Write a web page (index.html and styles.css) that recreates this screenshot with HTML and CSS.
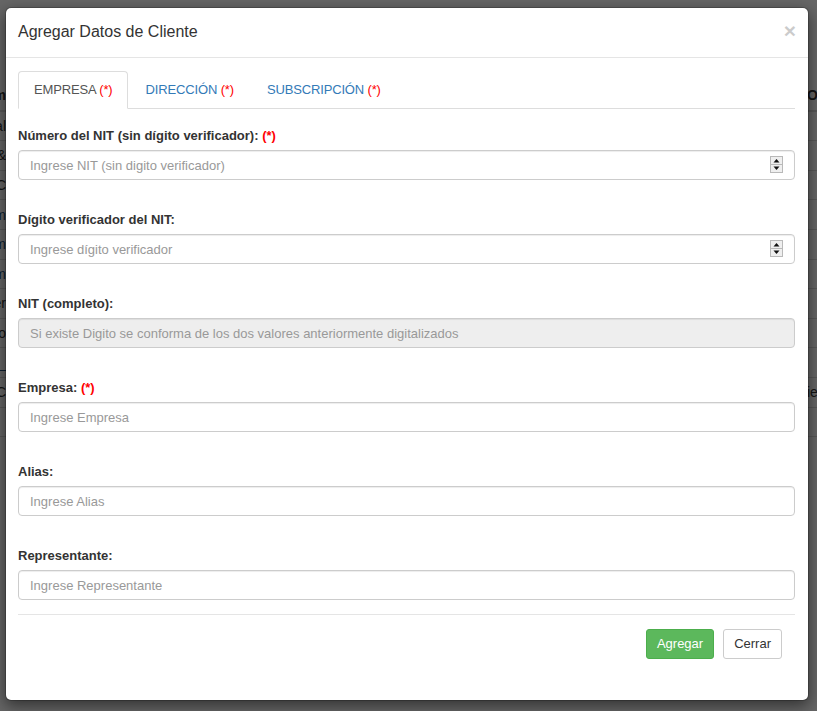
FILE: index.html
```html
<!DOCTYPE html>
<html lang="es">
<head>
<meta charset="utf-8">
<title>Agregar Datos de Cliente</title>
<link rel="stylesheet" href="styles.css">
</head>
<body>
<div class="page">
  <div class="bg-table">
    <div class="bg-row head"><div class="bg-l">Nom</div><div class="bg-m"></div><div class="bg-r">O</div></div>
    <div class="bg-row"><div class="bg-l">Dal</div><div class="bg-m"></div><div class="bg-r"></div></div>
    <div class="bg-row"><div class="bg-l">A &amp;</div><div class="bg-m"></div><div class="bg-r"></div></div>
    <div class="bg-row"><div class="bg-l">ABC</div><div class="bg-m"></div><div class="bg-r"></div></div>
    <div class="bg-row"><div class="bg-l link">Sam</div><div class="bg-m"></div><div class="bg-r"></div></div>
    <div class="bg-row"><div class="bg-l link">Tam</div><div class="bg-m"></div><div class="bg-r"></div></div>
    <div class="bg-row"><div class="bg-l link">Jim</div><div class="bg-m"></div><div class="bg-r"></div></div>
    <div class="bg-row"><div class="bg-l">Ber</div><div class="bg-m"></div><div class="bg-r"></div></div>
    <div class="bg-row"><div class="bg-l">Lo</div><div class="bg-m"></div><div class="bg-r"></div></div>
    <div class="bg-row"><div class="bg-l link">Li_</div><div class="bg-m"></div><div class="bg-r"></div></div>
    <div class="bg-row"><div class="bg-l">AC</div><div class="bg-m"></div><div class="bg-r">ie</div></div>
    <div class="bg-row"><div class="bg-l"></div><div class="bg-m"></div><div class="bg-r"></div></div>
    <div class="bg-row"><div class="bg-l"></div><div class="bg-m"></div><div class="bg-r"></div></div>
  </div>
</div>
<div class="backdrop"></div>

<div class="modal">
  <div class="modal-header">
    <h4 class="modal-title">Agregar Datos de Cliente</h4>
    <button class="close" type="button">&times;</button>
  </div>
  <div class="modal-body">
    <ul class="nav-tabs">
      <li class="active"><a>EMPRESA <span class="req">(*)</span></a></li>
      <li><a>DIRECCIÓN <span class="req">(*)</span></a></li>
      <li><a>SUBSCRIPCIÓN <span class="req">(*)</span></a></li>
    </ul>
    <div class="tab-content">
      <div class="form-group">
        <label>Número del NIT (sin dígito verificador): <span class="req">(*)</span></label>
        <div class="input-wrap">
          <input class="form-control" type="text" placeholder="Ingrese NIT (sin digito verificador)">
          <span class="spinner"><svg width="13" height="17" viewBox="0 0 13 17"><rect x="0.5" y="0.5" width="12" height="16" fill="#efefef" stroke="#b9b9b9"/><line x1="1" y1="8.5" x2="12" y2="8.5" stroke="#b9b9b9"/><polygon points="6.5,3 9.5,6.5 3.5,6.5" fill="#111"/><polygon points="3.5,10.5 9.5,10.5 6.5,14" fill="#111"/></svg></span>
        </div>
      </div>
      <div class="form-group">
        <label>Dígito verificador del NIT:</label>
        <div class="input-wrap">
          <input class="form-control" type="text" placeholder="Ingrese dígito verificador">
          <span class="spinner"><svg width="13" height="17" viewBox="0 0 13 17"><rect x="0.5" y="0.5" width="12" height="16" fill="#efefef" stroke="#b9b9b9"/><line x1="1" y1="8.5" x2="12" y2="8.5" stroke="#b9b9b9"/><polygon points="6.5,3 9.5,6.5 3.5,6.5" fill="#111"/><polygon points="3.5,10.5 9.5,10.5 6.5,14" fill="#111"/></svg></span>
        </div>
      </div>
      <div class="form-group">
        <label>NIT (completo):</label>
        <input class="form-control" type="text" disabled placeholder="Si existe Digito se conforma de los dos valores anteriormente digitalizados">
      </div>
      <div class="form-group">
        <label>Empresa: <span class="req">(*)</span></label>
        <input class="form-control" type="text" placeholder="Ingrese Empresa">
      </div>
      <div class="form-group">
        <label>Alias:</label>
        <input class="form-control" type="text" placeholder="Ingrese Alias">
      </div>
      <div class="form-group last">
        <label>Representante:</label>
        <input class="form-control" type="text" placeholder="Ingrese Representante">
      </div>
    </div>
    <hr class="divider">
    <div class="modal-footer">
      <button class="btn btn-success" type="button">Agregar</button>
      <button class="btn btn-default" type="button">Cerrar</button>
    </div>
  </div>
</div>
</body>
</html>
```

FILE: styles.css
```css
* { box-sizing: border-box; }
html, body { margin: 0; padding: 0; }
body {
  width: 817px;
  height: 711px;
  overflow: hidden;
  background: #fff;
  font-family: "Liberation Sans", Arial, sans-serif;
  font-size: 13px;
  color: #333;
  position: relative;
}

/* background page */
.page { padding-top: 81px; }
.bg-table { display: flex; flex-direction: column; }
.bg-row {
  display: flex;
  height: 29.6px;
  border-top: 1px solid #ddd;
  align-items: center;
}
.bg-row.head { font-weight: bold; border-top: none; border-bottom: 1px solid #ddd; }
.bg-l {
  width: 6px;
  overflow: hidden;
  display: flex;
  justify-content: flex-end;
  white-space: nowrap;
  font-size: 14px;
  color: #333;
}
.bg-l.link { color: #23527c; }
.bg-m { flex: 1; }
.bg-r {
  width: 10px;
  white-space: nowrap;
  overflow: hidden;
  font-size: 14px;
}

.backdrop {
  position: absolute;
  inset: 0;
  background: rgba(0, 0, 0, 0.6);
}

/* modal */
.modal {
  position: absolute;
  left: 5px;
  top: 7px;
  width: 804px;
  height: 694px;
  background: #fff;
  border: 1px solid rgba(0, 0, 0, 0.2);
  border-radius: 6px;
  box-shadow: 0 5px 15px rgba(0, 0, 0, 0.5);
  background-clip: padding-box;
}
.modal-header {
  display: flex;
  justify-content: space-between;
  align-items: flex-start;
  padding: 14px 13px 15px 12px;
  border-bottom: 1px solid #e5e5e5;
}
.modal-title {
  margin: 0;
  font-size: 16px;
  font-weight: normal;
  line-height: 20px;
  color: #333;
}
.close {
  border: 0;
  background: transparent;
  padding: 0;
  font-family: "Liberation Sans", Arial, sans-serif;
  font-size: 21px;
  font-weight: bold;
  line-height: 1;
  color: #000;
  opacity: 0.2;
  text-shadow: 0 1px 0 #fff;
  margin-top: -2px;
  margin-right: -1px;
}

.modal-body { padding: 13px 13px 0 12px; }

.nav-tabs {
  list-style: none;
  margin: 0;
  padding: 0;
  display: flex;
  border-bottom: 1px solid #ddd;
}
.nav-tabs li { margin-bottom: -1px; margin-right: 2px; }
.nav-tabs a {
  display: block;
  padding: 9px 14px 10px 15px;
  line-height: 17px;
  border: 1px solid transparent;
  border-radius: 4px 4px 0 0;
  color: #337ab7;
  letter-spacing: -0.15px;
  cursor: pointer;
}
.nav-tabs li.active a {
  color: #555;
  background: #fff;
  border-color: #ddd #ddd transparent;
}
.req { color: #f00; }

.tab-content { padding-top: 17px; }
.form-group { margin-bottom: 30px; }
.form-group.last { margin-bottom: 0; }
.form-group label {
  display: block;
  font-weight: bold;
  line-height: 19px;
  margin-bottom: 5px;
  color: #333;
}
.input-wrap { position: relative; }
.form-control {
  display: block;
  width: 100%;
  height: 30px;
  padding: 5px 11px;
  font-family: "Liberation Sans", Arial, sans-serif;
  font-size: 13px;
  line-height: 18px;
  color: #555;
  background: #fff;
  border: 1px solid #ccc;
  border-radius: 4px;
  box-shadow: inset 0 1px 1px rgba(0, 0, 0, 0.075);
  outline: none;
}
.form-control::placeholder { color: #999; opacity: 1; }
.form-control:disabled { background: #eee; }
.spinner {
  position: absolute;
  right: 12px;
  top: 6px;
  width: 13px;
  height: 17px;
  display: block;
}
.spinner svg { display: block; }

.divider {
  margin: 14px 0 0;
  border: 0;
  border-top: 1px solid #e5e5e5;
  height: 0;
}
.modal-footer {
  display: flex;
  justify-content: flex-end;
  gap: 9px;
  padding: 14px 13px 0 0;
}
.btn {
  display: inline-block;
  padding: 5px 10px;
  font-family: "Liberation Sans", Arial, sans-serif;
  font-size: 13px;
  line-height: 18px;
  border: 1px solid transparent;
  border-radius: 3px;
  cursor: pointer;
}
.btn-success { color: #fff; background: #5cb85c; border-color: #4cae4c; }
.btn-default { color: #333; background: #fff; border-color: #ccc; }
```
